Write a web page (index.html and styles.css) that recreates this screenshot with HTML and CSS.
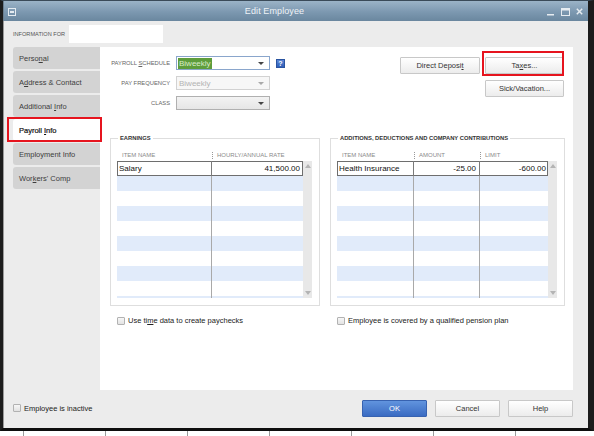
FILE: index.html
```html
<!DOCTYPE html>
<html>
<head>
<meta charset="utf-8">
<title>Edit Employee</title>
<link rel="stylesheet" href="styles.css">
</head>
<body>
<div class="screen">
  <div class="window">
    <div class="titlebar">
      <svg class="sysicon" width="8" height="8" viewBox="0 0 8 8"><rect x="0.5" y="0.5" width="7" height="7" fill="none" stroke="#e4ebf1" stroke-width="1"/><rect x="2" y="3" width="4" height="2" fill="#e4ebf1"/></svg>
      <div class="title">Edit Employee</div>
      <div class="controls">
        <svg width="8" height="8" viewBox="0 0 8 8"><rect x="0" y="6" width="7" height="1.5" fill="#e6ecf1"/></svg>
        <svg width="9" height="8" viewBox="0 0 9 8"><rect x="0.5" y="0.5" width="8" height="7" fill="none" stroke="#e6ecf1" stroke-width="1"/><rect x="0.5" y="0.5" width="8" height="2" fill="#e6ecf1"/></svg>
        <svg width="7" height="7" viewBox="0 0 7 7"><path d="M0.8 0.8 L6.2 6.2 M6.2 0.8 L0.8 6.2" stroke="#e6ecf1" stroke-width="1.5"/></svg>
      </div>
    </div>
    <div class="content">
      <div class="info-row">
        <span class="info-label">INFORMATION FOR</span>
        <div class="info-input"></div>
      </div>
      <div class="main">
        <div class="tabs">
          <div class="tab"><span>Perso<u>n</u>al</span></div>
          <div class="tab"><span>A<u>d</u>dress &amp; Contact</span></div>
          <div class="tab"><span>Additional <u>I</u>nfo</span></div>
          <div class="tab active"><span>Payroll <u>I</u>nfo</span></div>
          <div class="tab"><span>Employment Info</span></div>
          <div class="tab"><span>Wor<u>k</u>ers' Comp</span></div>
        </div>
        <div class="panel">
          <div class="top">
            <div class="form">
              <div class="frow">
                <span class="flabel">PAYROLL <u>S</u>CHEDULE</span>
                <div class="select focus"><span class="sel-text">Biweekly</span><span class="arrow"></span></div>
                <span class="help">?</span>
              </div>
              <div class="frow">
                <span class="flabel">PAY FREQUENCY</span>
                <div class="select disabled"><span class="dis-text">Biweekly</span><span class="arrow light"></span></div>
              </div>
              <div class="frow">
                <span class="flabel">CLASS</span>
                <div class="select grey"><span></span><span class="arrow"></span></div>
              </div>
            </div>
            <div class="actions">
              <div class="btn dd"><span>Direct Deposi<u>t</u></span></div>
              <div class="btn taxes"><span>Ta<u>x</u>es...</span></div>
              <div class="btn sick"><span>Sick/Vacation...</span></div>
            </div>
          </div>
          <div class="groups">
            <div class="gcol earn">
              <fieldset class="group">
                <legend>EARNINGS</legend>
                <div class="thead earn-cols">
                  <span>ITEM NAME</span>
                  <span class="sep">HOURLY/ANNUAL RATE</span>
                </div>
                <div class="tablewrap">
                  <div class="grid">
                    <div class="row earn-cols first"><span>Salary</span><span class="num">41,500.00</span></div>
                    <div class="row earn-cols"><span></span><span></span></div>
                    <div class="row earn-cols"><span></span><span></span></div>
                    <div class="row earn-cols"><span></span><span></span></div>
                    <div class="row earn-cols"><span></span><span></span></div>
                    <div class="row earn-cols"><span></span><span></span></div>
                    <div class="row earn-cols"><span></span><span></span></div>
                    <div class="row earn-cols"><span></span><span></span></div>
                    <div class="row earn-cols"><span></span><span></span></div>
                    <div class="row earn-cols"><span></span><span></span></div>
                  </div>
                  <div class="scroll"><span class="up"></span><span class="down"></span></div>
                </div>
              </fieldset>
              <label class="check"><span class="box"></span><span>Use ti<u>m</u>e data to create paychecks</span></label>
            </div>
            <div class="gcol adds">
              <fieldset class="group">
                <legend>ADDITIONS, DEDUCTIONS AND COMPANY CONTRIBUTIONS</legend>
                <div class="thead add-cols">
                  <span>ITEM NAME</span>
                  <span class="sep">AMOUNT</span>
                  <span class="sep">LIMIT</span>
                </div>
                <div class="tablewrap">
                  <div class="grid">
                    <div class="row add-cols first"><span>Health Insurance</span><span class="num">-25.00</span><span class="num">-600.00</span></div>
                    <div class="row add-cols"><span></span><span></span><span></span></div>
                    <div class="row add-cols"><span></span><span></span><span></span></div>
                    <div class="row add-cols"><span></span><span></span><span></span></div>
                    <div class="row add-cols"><span></span><span></span><span></span></div>
                    <div class="row add-cols"><span></span><span></span><span></span></div>
                    <div class="row add-cols"><span></span><span></span><span></span></div>
                    <div class="row add-cols"><span></span><span></span><span></span></div>
                    <div class="row add-cols"><span></span><span></span><span></span></div>
                    <div class="row add-cols"><span></span><span></span><span></span></div>
                  </div>
                  <div class="scroll"><span class="up"></span><span class="down"></span></div>
                </div>
              </fieldset>
              <label class="check"><span class="box"></span><span>Employee is covered by a qualified pension plan</span></label>
            </div>
          </div>
        </div>
      </div>
      <div class="footer">
        <label class="check"><span class="box"></span><span>Employee is inactive</span></label>
        <div class="fbuttons">
          <div class="btn ok"><span>OK</span></div>
          <div class="btn"><span>Cancel</span></div>
          <div class="btn"><span>Help</span></div>
        </div>
      </div>
    </div>
  </div>
  <div class="ticks"></div>
</div>
</body>
</html>
```
FILE: styles.css
```css
* { box-sizing: border-box; }
html, body { margin: 0; padding: 0; }
body {
  width: 594px;
  height: 436px;
  overflow: hidden;
  background: #ffffff;
  font-family: "Liberation Sans", Arial, sans-serif;
  font-size: 7.5px;
  color: #222;
}
u { text-decoration: underline; text-underline-offset: 1px; }

.screen { width: 594px; height: 436px; display: flex; flex-direction: column; }

.window {
  width: 594px;
  height: 431px;
  border-top: 1px solid #3a4a58;
  border-left: 3px solid #1c1c1c;
  border-right: 6px solid #1c1c1c;
  border-bottom: 3px solid #0e0e0e;
  display: flex;
  flex-direction: column;
  background: #ececec;
}

.ticks {
  flex: 1;
  background: linear-gradient(to right, #9a9a9a 1px, transparent 1px) 23px 0 / 82px 100% repeat-x;
}

/* title bar */
.titlebar {
  height: 20px;
  display: flex;
  align-items: center;
  background: linear-gradient(#9bb3c7, #7c98b0 55%, #6a879f);
  color: #eef3f7;
  padding: 0 5px 0 4px;
  border-left: 1px solid #6b7f90;
}
.sysicon { margin-top: 2px; flex: none; }
.title {
  flex: 1;
  text-align: center;
  font-size: 9px;
  padding-right: 14px;
  letter-spacing: 0.1px;
}
.controls { display: flex; align-items: center; gap: 6px; flex: none; margin-top: 1px; }

/* content */
.content {
  flex: 1;
  display: flex;
  flex-direction: column;
  padding: 0 15px 0 9px;
  border-left: 1px solid #9a9a9a;
}
.info-row {
  display: flex;
  align-items: center;
  height: 18px;
  margin-top: 4px;
}
.info-label { font-size: 5.6px; color: #555; width: 56px; }
.info-input { width: 94px; height: 18px; background: #fff; }

.main {
  display: flex;
  margin-top: 4px;
  height: 343px;
}

/* tabs */
.tabs {
  width: 88px;
  display: flex;
  flex-direction: column;
  gap: 2px;
}
.tab {
  height: 22px;
  background: #d3d3d3;
  border-radius: 3px 0 0 3px;
  display: flex;
  align-items: center;
  padding-left: 6px;
  color: #3d3d3d;
  font-size: 7.5px;
}
.tab.active {
  background: #fff;
  color: #111;
  position: relative;
  -webkit-text-stroke: 0.2px #111;
}
.tab.active::after {
  content: "";
  position: absolute;
  left: -6px;
  right: -2px;
  top: -2px;
  bottom: -1px;
  border: 2px solid #e6141e;
}

/* panel */
.panel {
  flex: 1;
  background: #fff;
  display: flex;
  flex-direction: column;
  padding: 9px 8px 0 0;
}
.top { display: flex; justify-content: space-between; align-items: flex-start; }
.form { display: flex; flex-direction: column; gap: 6px; }
.frow { display: flex; align-items: center; height: 14px; }
.flabel {
  width: 70px;
  text-align: right;
  font-size: 5.8px;
  color: #666;
}
.select {
  width: 94px;
  height: 14px;
  margin-left: 6px;
  border: 1px solid #b5b5b5;
  background: #fff;
  display: flex;
  align-items: center;
  justify-content: space-between;
  padding: 0 5px 0 1px;
  font-size: 8px;
}
.select.focus { border-color: #8aa6cc; }
.sel-text {
  background: #5e9d3c;
  color: #d9ecc9;
  padding: 0 1px;
  line-height: 11px;
}
.select.disabled { background: #f7f7f7; border-color: #d2d2d2; }
.dis-text { color: #b3b3b3; padding-left: 1px; }
.select.grey { background: linear-gradient(#f3f3f3, #e6e6e6); border-color: #b0b0b0; }
.arrow {
  width: 0; height: 0;
  border-left: 3px solid transparent;
  border-right: 3px solid transparent;
  border-top: 3px solid #444;
}
.arrow.light { border-top-color: #aaa; }
.help {
  margin-left: 6px;
  width: 9px;
  height: 9px;
  background: linear-gradient(#5b86d6, #2f5fb8);
  border: 1px solid #2a54a0;
  color: #fff;
  font-size: 7px;
  line-height: 7px;
  text-align: center;
  font-weight: bold;
}

.actions {
  display: grid;
  grid-template-columns: 80px 79px;
  column-gap: 5px;
  row-gap: 6px;
  margin-top: 1px;
  margin-right: 1px;
}
.btn {
  height: 17px;
  border: 1px solid #c8c8c8;
  background: linear-gradient(#ffffff, #ececec);
  border-radius: 1px;
  display: flex;
  align-items: center;
  justify-content: center;
  font-size: 7.5px;
  color: #333;
}
.dd { grid-column: 1; grid-row: 1; }
.taxes { grid-column: 2; grid-row: 1; position: relative; }
.taxes::after {
  content: "";
  position: absolute;
  left: -4px;
  right: -1px;
  top: -7px;
  bottom: -3px;
  border: 2px solid #e6141e;
}
.sick { grid-column: 2; grid-row: 2; }

/* groups */
.groups {
  display: flex;
  gap: 10px;
  margin-top: 24px;
  padding-left: 10px;
}
.gcol { display: flex; flex-direction: column; }
.earn { width: 210px; }
.adds { width: 235px; }
.group {
  margin: 0;
  border: 1px solid #dedede;
  padding: 7px 7px 7px 6px;
  min-width: 0;
}
.group legend {
  font-size: 5.8px;
  font-weight: bold;
  color: #333;
  padding: 0 2px;
  margin-left: 1px;
  line-height: 8px;
}
.thead {
  display: grid;
  height: 12px;
  align-items: center;
  font-size: 6px;
  color: #8a8a8a;
}
.thead span { padding-left: 5px; }
.thead .sep {
  border-left: 1px dotted #999;
  padding-left: 4px;
  height: 7px;
  line-height: 7px;
}
.earn-cols { grid-template-columns: 95px 91px; }
.add-cols { grid-template-columns: 77px 66px 69px; }

.tablewrap { display: flex; height: 137px; }
.grid { flex: 1; overflow: hidden; }
.row {
  display: grid;
  height: 15px;
  background: #fff;
  font-size: 8px;
  color: #111;
}
.row:nth-child(even) { background: #e1ebfa; }
.row span {
  border-right: 1px solid #a9a9a9;
  display: flex;
  align-items: center;
  padding: 0 3px 0 2px;
}
.row span:last-child { border-right: none; }
.row .num { justify-content: flex-end; }
.row.first { box-shadow: inset 0 0 0 1px #6e6e6e; }
.row.first span { border-right-color: #7a7a7a; }
.scroll {
  width: 9px;
  background: #e8e8e8;
  display: flex;
  flex-direction: column;
  justify-content: space-between;
  align-items: center;
  padding: 3px 0;
}
.scroll .up {
  width: 0; height: 0;
  border-left: 3px solid transparent;
  border-right: 3px solid transparent;
  border-bottom: 4px solid #b4b4b4;
}
.scroll .down {
  width: 0; height: 0;
  border-left: 3px solid transparent;
  border-right: 3px solid transparent;
  border-top: 4px solid #b4b4b4;
}

.check {
  display: flex;
  align-items: center;
  gap: 3px;
  font-size: 7.5px;
  color: #222;
}
.gcol .check { margin-top: 10px; margin-left: 7px; }
.box {
  width: 8px;
  height: 8px;
  border: 1px solid #b2b2b2;
  border-radius: 1px;
  background: linear-gradient(#f7f7f7, #e2e2e2);
  flex: none;
}

/* footer */
.footer {
  flex: 1;
  display: flex;
  align-items: center;
  padding-bottom: 2px;
}
.fbuttons {
  margin-left: auto;
  display: flex;
  gap: 8px;
}
.fbuttons .btn { width: 65px; }
.btn.ok {
  background: linear-gradient(#6194de, #3a6bc2);
  border-color: #3762b0;
  color: #fff;
}
```
